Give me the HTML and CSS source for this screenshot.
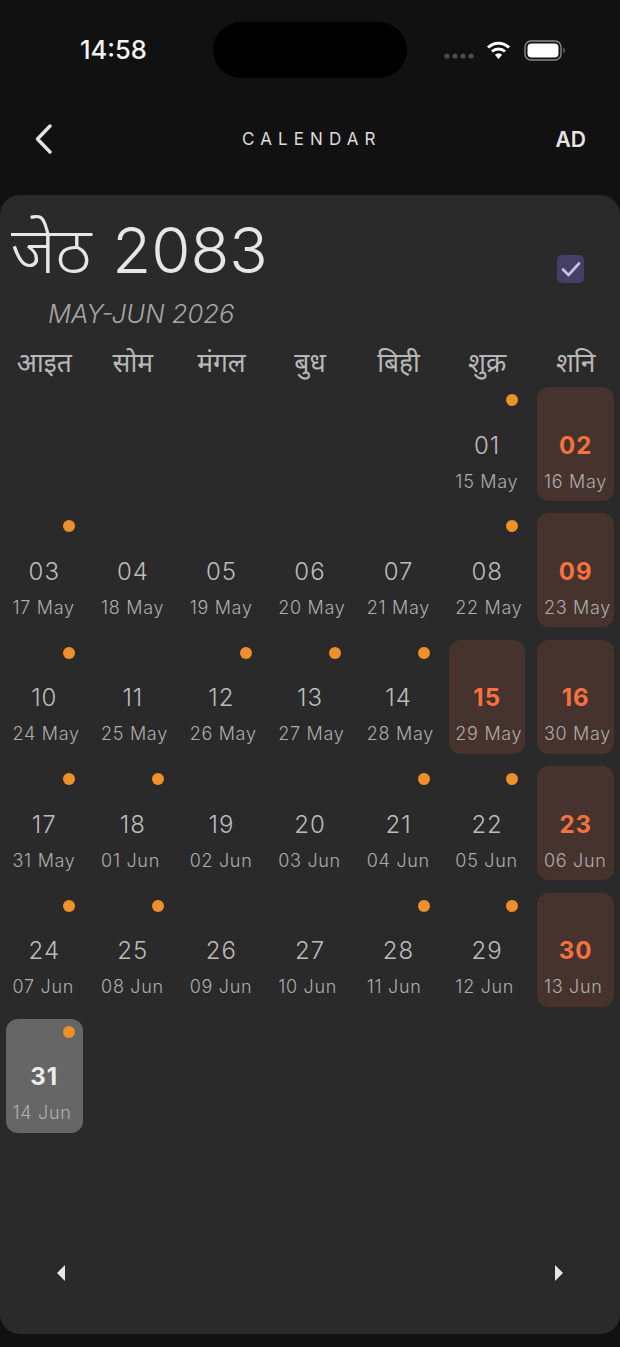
FILE: index.html
```html
<!DOCTYPE html>
<html lang="ne">
<head>
<meta charset="utf-8">
<title>Calendar</title>
<link rel="stylesheet" href="styles.css">
</head>
<body>
<div class="page">
  <header class="status">
    <span class="time">14:58</span>
    <div class="island"></div>
    <div class="status-icons">
      <svg class="signal" width="30" height="6" viewBox="0 0 30 6"><circle cx="3" cy="3" r="2.6"/><circle cx="11" cy="3" r="2.6"/><circle cx="19" cy="3" r="2.6"/><circle cx="27" cy="3" r="2.6"/></svg>
      <svg class="wifi" width="25" height="20" viewBox="0 0 25 20"><path d="M2 7.500a15 15 0 0 1 21 0M6 11.500a9.500 9.500 0 0 1 13 0" fill="none" stroke="#fff" stroke-width="3"/><path d="M8.900 14.800a5 5 0 0 1 7.200 0L12.500 19z" fill="#fff"/></svg>
      <svg class="battery" width="42" height="21" viewBox="0 0 42 21"><rect x="1" y="1" width="36" height="19" rx="6" fill="none" stroke="#8a8a8a" stroke-width="1.400"/><rect x="3.500" y="3.500" width="31" height="14" rx="4" fill="#fff"/><path d="M39.500 7.500c1.500.5 1.500 5.500 0 6z" fill="#8a8a8a"/></svg>
    </div>
  </header>
  <nav class="nav">
    <svg class="back" width="20" height="30" viewBox="0 0 20 30"><path d="M16 2 3.500 15 16 28" fill="none" stroke="#e4e4e4" stroke-width="3.400" stroke-linecap="round" stroke-linejoin="round"/></svg>
    <span class="nav-title">CALENDAR</span>
    <span class="nav-ad">AD</span>
  </nav>
  <main class="card">
    <div class="title-row">
      <div>
        <h1 class="month">जेठ 2083</h1>
        <p class="sub">MAY-JUN 2026</p>
      </div>
      <span class="check"><svg width="20" height="16" viewBox="0 0 20 16"><path d="M2 8.500 7.500 14 18 2.500" fill="none" stroke="#c9c2e0" stroke-width="2.600" stroke-linecap="round" stroke-linejoin="round"/></svg></span>
    </div>
    <div class="grid week">
      <span>आइत</span><span>सोम</span><span>मंगल</span><span>बुध</span><span>बिही</span><span>शुक्र</span><span>शनि</span>
    </div>
    <div class="grid days">
      <div class="cell dot start"><b>01</b><small>15 May</small></div>
      <div class="cell sat"><b>02</b><small>16 May</small></div>
      <div class="cell dot"><b>03</b><small>17 May</small></div>
      <div class="cell"><b>04</b><small>18 May</small></div>
      <div class="cell"><b>05</b><small>19 May</small></div>
      <div class="cell"><b>06</b><small>20 May</small></div>
      <div class="cell"><b>07</b><small>21 May</small></div>
      <div class="cell dot"><b>08</b><small>22 May</small></div>
      <div class="cell sat"><b>09</b><small>23 May</small></div>
      <div class="cell dot"><b>10</b><small>24 May</small></div>
      <div class="cell"><b>11</b><small>25 May</small></div>
      <div class="cell dot"><b>12</b><small>26 May</small></div>
      <div class="cell dot"><b>13</b><small>27 May</small></div>
      <div class="cell dot"><b>14</b><small>28 May</small></div>
      <div class="cell sat"><b>15</b><small>29 May</small></div>
      <div class="cell sat"><b>16</b><small>30 May</small></div>
      <div class="cell dot"><b>17</b><small>31 May</small></div>
      <div class="cell dot"><b>18</b><small>01 Jun</small></div>
      <div class="cell"><b>19</b><small>02 Jun</small></div>
      <div class="cell"><b>20</b><small>03 Jun</small></div>
      <div class="cell dot"><b>21</b><small>04 Jun</small></div>
      <div class="cell dot"><b>22</b><small>05 Jun</small></div>
      <div class="cell sat"><b>23</b><small>06 Jun</small></div>
      <div class="cell dot"><b>24</b><small>07 Jun</small></div>
      <div class="cell dot"><b>25</b><small>08 Jun</small></div>
      <div class="cell"><b>26</b><small>09 Jun</small></div>
      <div class="cell"><b>27</b><small>10 Jun</small></div>
      <div class="cell dot"><b>28</b><small>11 Jun</small></div>
      <div class="cell dot"><b>29</b><small>12 Jun</small></div>
      <div class="cell sat"><b>30</b><small>13 Jun</small></div>
      <div class="cell dot today"><b>31</b><small>14 Jun</small></div>
    </div>
    <div class="pager">
      <svg width="10" height="16" viewBox="0 0 10 16"><path d="M9 0V16L1 8z" fill="#e6e6e6"/></svg>
      <svg width="10" height="16" viewBox="0 0 10 16"><path d="M1 0V16L9 8z" fill="#e6e6e6"/></svg>
    </div>
  </main>
</div>
</body>
</html>
```
FILE: styles.css
```css
* { box-sizing: border-box; }
html, body { margin: 0; padding: 0; }
body { background: #111; font-family: Inter, "Noto Sans", "Noto Sans Devanagari", sans-serif; }
.page { width: 620px; height: 1347px; display: flex; flex-direction: column; overflow: hidden; background: #111; }

.status { position: relative; height: 100px; display: flex; justify-content: space-between; align-items: flex-start; padding: 35px 54px 0 80px; }
.time { color: #f4f4f4; font-size: 25.500px; font-weight: 500; line-height: 30px; }
.island { position: absolute; left: 213px; top: 22px; width: 194px; height: 56px; border-radius: 28px; background: #000; }
.status-icons { display: flex; align-items: center; margin-top: 9px; }
.signal { fill: #4d4d4d; margin: 7px 12px 0 0; }
.wifi { margin: -6px 13px 0 0; }
.battery { margin-top: -4px; }

.nav { height: 78px; margin-bottom: 17px; padding: 0 34px; display: flex; align-items: center; justify-content: space-between; }
.back { display: block; }
.nav-title { color: #dcdcdc; font-size: 17px; letter-spacing: 6.100px; margin-left: 14px; }
.nav-ad { color: #e4e4e4; font-size: 21px; font-weight: 600; }

.card { height: 1139px; background: #2a2a2a; border-radius: 20px; display: flex; flex-direction: column; }
.title-row { display: flex; justify-content: space-between; align-items: flex-start; padding: 20px 36px 0 11px; }
.month { margin: 0; color: #e6e6e6; font-size: 63.500px; font-weight: 350; line-height: 70px; white-space: nowrap; word-spacing: 3px; }
.sub { margin: 14px 0 0 37px; color: #a6a6a6; font-size: 25.600px; font-weight: 300; font-style: italic; line-height: 30px; }
.check { width: 27px; height: 28px; margin-top: 40px; background: #463f66; border-radius: 5px; display: flex; align-items: center; justify-content: center; }

.grid { display: grid; grid-template-columns: repeat(7, 1fr); column-gap: 12px; padding: 0 6px; }
.week { margin-top: 13px; height: 45px; }
.week span { color: #b8b8b8; font-size: 26.400px; line-height: 40px; text-align: center; white-space: nowrap; }
.days { row-gap: 12.400px; grid-auto-rows: 114px; }

.cell { position: relative; border-radius: 12px; display: flex; flex-direction: column; align-items: center; padding-top: 43.500px; }
.cell b { color: #bcbcbc; font-size: 24px; font-weight: 300; line-height: 30px; letter-spacing: 1px; }
.cell small { align-self: flex-start; margin: 6px 0 0 6.500px; color: #adadad; font-size: 18px; font-weight: 350; line-height: 30px; letter-spacing: .7px; white-space: nowrap; }
.start { grid-column-start: 6; }
.dot::after { content: ""; position: absolute; top: 7px; right: 7.300px; width: 12px; height: 12px; border-radius: 50%; background: #f0902c; }
.sat { background: #47332e; }
.sat b { color: #f57240; font-weight: 700; }
.today { background: #666; }
.today b { color: #ececec; font-weight: 700; }
.today small { color: #b0b0b0; }

.pager { margin-top: auto; padding: 0 56px 53px; display: flex; justify-content: space-between; }
.pager svg { display: block; }
```
